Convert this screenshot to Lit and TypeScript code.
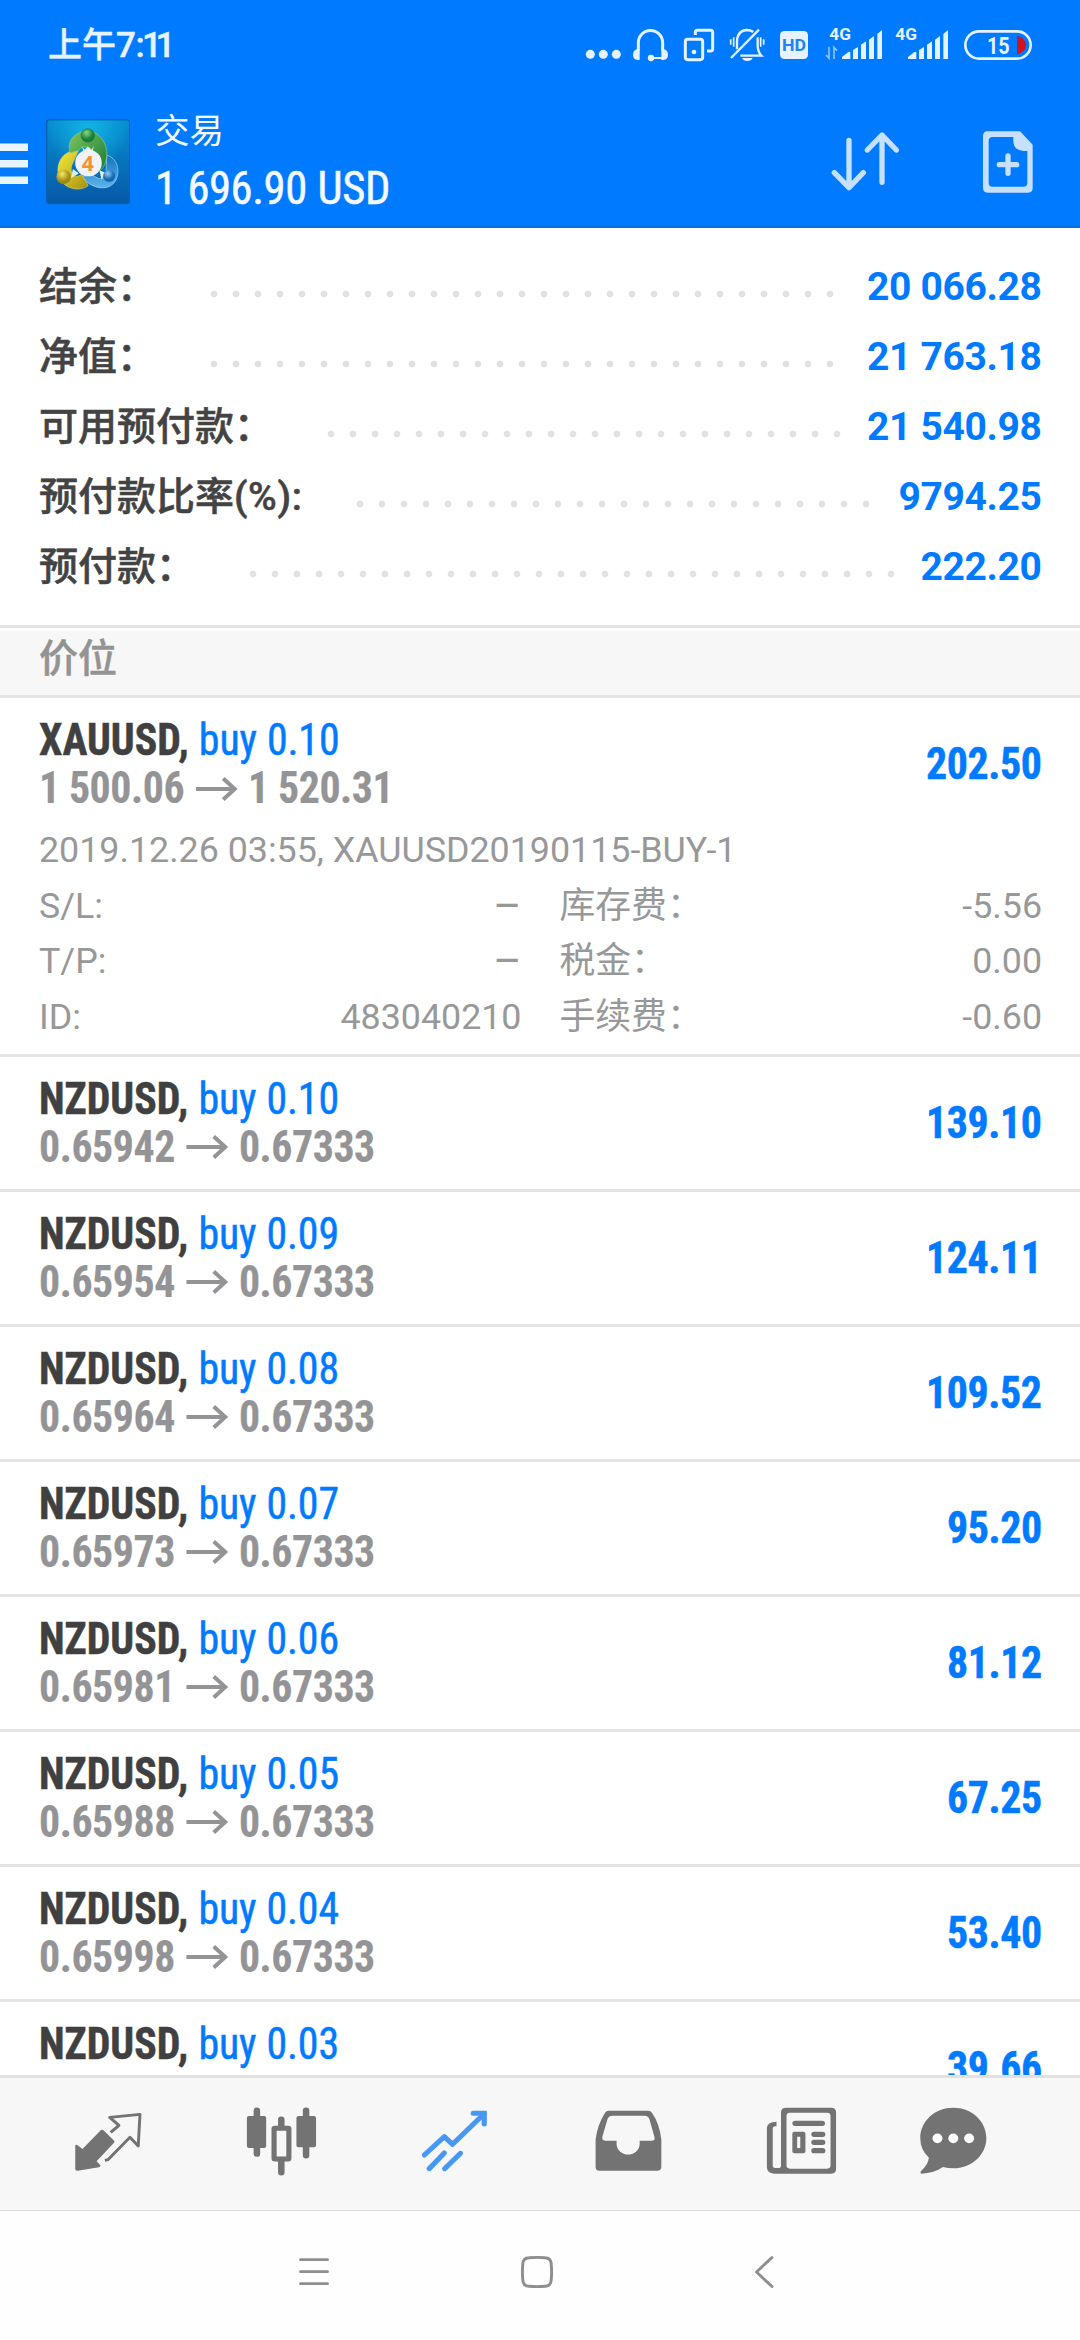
import { LitElement, html, css, svg, nothing } from "lit";
import { customElement, property } from "lit/decorators.js";

interface SummaryRow { label: string; suffix?: string; value: string; dots: number; }
interface Trade {
  symbol: string; side: string; open: string; now: string; profit: string;
  details?: { comment: string; rows: [string, string, string, string][] };
}

const SUMMARY: SummaryRow[] = [
  { label: "结余：", value: "20 066.28", dots: 29 },
  { label: "净值：", value: "21 763.18", dots: 29 },
  { label: "可用预付款：", value: "21 540.98", dots: 24 },
  { label: "预付款比率", suffix: "(%):", value: "9794.25", dots: 24 },
  { label: "预付款：", value: "222.20", dots: 30 },
];

const nzd = (side: string, open: string, profit: string): Trade =>
  ({ symbol: "NZDUSD", side, open, now: "0.67333", profit });

const TRADES: Trade[] = [
  {
    symbol: "XAUUSD", side: "buy 0.10", open: "1 500.06", now: "1 520.31", profit: "202.50",
    details: {
      comment: "2019.12.26 03:55, XAUUSD20190115-BUY-1",
      rows: [
        ["S/L:", "–", "库存费：", "-5.56"],
        ["T/P:", "–", "税金：", "0.00"],
        ["ID:", "483040210", "手续费：", "-0.60"],
      ],
    },
  },
  nzd("buy 0.10", "0.65942", "139.10"),
  nzd("buy 0.09", "0.65954", "124.11"),
  nzd("buy 0.08", "0.65964", "109.52"),
  nzd("buy 0.07", "0.65973", "95.20"),
  nzd("buy 0.06", "0.65981", "81.12"),
  nzd("buy 0.05", "0.65988", "67.25"),
  nzd("buy 0.04", "0.65998", "53.40"),
  nzd("buy 0.03", "0.66010", "39.66"),
];

const base = css`
  * { box-sizing: border-box; }
  svg { display: block; flex: none; }
`;

@customElement("status-bar")
class StatusBar extends LitElement {
  static styles = [base, css`
    :host { display: flex; height: 90px; align-items: center; justify-content: space-between; padding: 0 44px 0 48px; color: #e6f3ff; }
    .time { font: 500 34px/91px Roboto, "Noto Sans CJK SC", sans-serif; white-space: nowrap; -webkit-text-stroke: 0.4px #e6f3ff; }
    .digits { font-size: 35px; letter-spacing: -0.3px; }
    .colon { letter-spacing: -2.8px; }
    .ones { letter-spacing: -6.3px; }
    .t { font-family: Roboto, sans-serif; font-weight: 700; }
  `];
  render() {
    const bars = (x: number) => svg`
      <path d="M${x} 177V171L${x + 18} 157Q${x + 25} 153 ${x + 25} 159V177Z"/>
      <path d="M${x + 33} 177V150L${x + 48} 141V177ZM${x + 57} 177V134L${x + 72} 124V177ZM${x + 81} 177V119L${x + 96} 108V177ZM${x + 106} 177V102L${x + 120} 90V177Z"/>`;
    return html`
      <div class="time">上午<span class="digits">7<span class="colon">:</span><span class="ones">11</span></span></div>
      <svg width="452" height="90" viewBox="72 0 1356 270" fill="#e6f3ff">
        <circle cx="91" cy="163" r="13.5"/><circle cx="130" cy="163" r="13.5"/><circle cx="169" cy="163" r="13.5"/>
        <g fill="none" stroke="#e6f3ff" stroke-width="9">
          <path d="M235 152V128a36.500 36.500 0 0 1 73 0V152"/>
          <path d="M273 174H308" stroke-width="6"/>
          <rect x="376" y="118" width="52" height="61" rx="7"/>
          <path d="M406 105V97Q406 91 412 91H452Q458 91 458 97V147Q458 153 452 153H441"/>
          <path d="M513 174L597 89" stroke-width="7"/>
          <path d="M531 148V126Q531 92 560 90Q572 90 580 96M593 112V140Q595 158 604 167H541" stroke-width="7"/>
          <path d="M521 112V140M512 118V134M602 112V140M611 118V134" stroke-width="5"/>
        </g>
        <path d="M239 148V180H233Q219 178 219 165Q219 150 232 148ZM304 148V180H310Q324 178 324 165Q324 150 311 148Z"/>
        <circle cx="273" cy="174" r="9.500"/><circle cx="402" cy="156" r="7"/>
        <path d="M546 174H578Q574 183 562 183T546 174Z"/>
        <rect x="660" y="93" width="84" height="84" rx="13"/>
        <text class="t" x="702" y="154" font-size="52" text-anchor="middle" textLength="72" lengthAdjust="spacingAndGlyphs" fill="#1f83f5">HD</text>
        <text class="t" x="808" y="120" font-size="47" textLength="65" lengthAdjust="spacingAndGlyphs">4G</text>
        <text class="t" x="1006" y="120" font-size="47" textLength="65" lengthAdjust="spacingAndGlyphs">4G</text>
        ${bars(846)} ${bars(1044)}
        <path d="M807 140V175L798 165M822 177V142L831 152" fill="none" stroke="#8cc2ff" stroke-width="5"/>
        <rect x="1216" y="94" width="196" height="82" rx="41" fill="none" stroke="#e6f3ff" stroke-width="8"/>
        <text class="t" x="1281" y="161" font-size="72" textLength="68" lengthAdjust="spacingAndGlyphs">15</text>
        <path d="M1371 107Q1398 114 1398 135T1371 163Z" fill="#d0131f"/>
      </svg>`;
  }
}

@customElement("app-header")
class AppHeader extends LitElement {
  static styles = [base, css`
    :host { display: flex; height: 138px; padding: 15px 46px 0 0; border-bottom: 2px solid #0b6cdb; color: #f4faff; font-family: Roboto, "Noto Sans CJK SC", sans-serif; }
    .menu { margin: 38px 18px 0 0; }
    .logo { margin-top: 14px; }
    .titles { margin-left: 25px; flex: 1; }
    .title { font-size: 34.5px; line-height: 46px; margin-top: 3px; }
    .sum { font-size: 47px; line-height: 56px; margin-top: 6px; font-stretch: 75%; letter-spacing: -0.45px; word-spacing: 1px; -webkit-text-stroke: 0.5px #f4faff; transform: scaleX(0.95); transform-origin: left; white-space: nowrap; }
    .four { font: 700 64px "Open Sans", sans-serif; }
    .swap { margin: 25px 79px 0 0; }
    .add { margin-top: 25px; }
  `];
  render() {
    return html`
      <svg class="menu" width="28" height="42" viewBox="0 0 28 42" fill="#e8f5ff">
        <path d="M0 .5H28V8H0ZM0 17H28V24.500H0ZM0 33.500H28V41H0Z"/>
      </svg>
      <svg class="logo" width="84" height="86" viewBox="137 58 253 258">
        <defs>
          <linearGradient id="bg" x2="0" y2="1"><stop offset="0" stop-color="#078fd2"/><stop offset="1" stop-color="#0758a8"/></linearGradient>
          <radialGradient id="gl" cy=".1"><stop offset="0" stop-color="#12b4e4"/><stop offset="1" stop-color="#12b4e4" stop-opacity="0"/></radialGradient>
          <linearGradient id="gr" x2="1" y2="1"><stop offset="0" stop-color="#7fc45e"/><stop offset="1" stop-color="#157a36"/></linearGradient>
          <linearGradient id="ye" x2="1" y2="1"><stop offset="0" stop-color="#f6ec3a"/><stop offset="1" stop-color="#a58f10"/></linearGradient>
          <linearGradient id="bl" x2="0" y2="1"><stop offset="0" stop-color="#1273bd"/><stop offset="1" stop-color="#5db4ea"/></linearGradient>
          <radialGradient id="hg" cx=".4" cy=".3"><stop offset="0" stop-color="#8fd67e"/><stop offset="1" stop-color="#16803c"/></radialGradient>
          <radialGradient id="hy" cx=".4" cy=".3"><stop offset="0" stop-color="#f4ea62"/><stop offset="1" stop-color="#a08a14"/></radialGradient>
          <radialGradient id="hb" cx=".4" cy=".3"><stop offset="0" stop-color="#8fcdf2"/><stop offset="1" stop-color="#1268b0"/></radialGradient>
        </defs>
        <rect x="139" y="60" width="250" height="252" rx="8" fill="url(#bg)" stroke="#0560b4" stroke-width="4"/>
        <rect x="141" y="62" width="246" height="248" rx="7" fill="url(#gl)"/>
        <path d="M320 166C350 176 360 206 350 236C336 274 282 276 244 232L272 222C300 246 318 240 318 214Z" fill="url(#bl)" stroke="#a8dcf6" stroke-width="2"/>
        <path d="M234 153C192 150 168 184 174 224C186 270 238 278 264 258L244 224C224 240 208 222 214 198Z" fill="url(#ye)" stroke="#e0d45c" stroke-width="2"/>
        <path d="M210 160C196 118 232 94 263 94C306 96 330 146 316 188C310 206 300 214 290 218L282 170C276 136 248 134 234 152Z" fill="url(#gr)" stroke="#8fd07a" stroke-width="2"/>
        <path d="M246 140L253 150L263 140L274 150L282 138L276 158H250ZM212 236L218 208L236 222ZM304 240L298 212L318 220Z" fill="#dfeede"/>
        <circle cx="263" cy="107" r="20" fill="url(#hg)" stroke="#14703a" stroke-width="2"/>
        <circle cx="190" cy="232" r="22" fill="url(#hy)"/>
        <circle cx="327" cy="229" r="18" fill="url(#hb)"/>
        <circle cx="265" cy="190" r="40" fill="#f1f1f8"/>
        <text class="four" x="263" y="213" text-anchor="middle" fill="#f3922f">4</text>
      </svg>
      <div class="titles">
        <div class="title">交易</div>
        <div class="sum">1 696.90 USD</div>
      </div>
      <svg class="swap" width="72" height="64" viewBox="812 390 216 192" fill="none" stroke="#c6e0ff" stroke-width="16" stroke-linecap="round" stroke-linejoin="round">
        <path d="M866 421V562M822 518L866 563L909 518M965 547V406M921 450L965 405L1008 450"/>
      </svg>
      <svg class="add" width="52" height="64" viewBox="1266 390 156 192" fill="#c6e0ff">
        <path fill-rule="evenodd" d="M1283 394H1380L1418 434V564Q1418 578 1404 578H1283Q1269 578 1269 564V408Q1269 394 1283 394ZM1298 411Q1286 411 1286 423V548Q1286 560 1298 560H1390Q1402 560 1402 548V453H1390Q1360 450 1360 422V411Z"/>
        <path d="M1344 468V520M1318 494H1370" stroke="#c6e0ff" stroke-width="16" stroke-linecap="round"/>
      </svg>`;
  }
}

@customElement("account-summary")
class AccountSummary extends LitElement {
  static styles = [base, css`
    :host { display: block; padding: 24px 38.5px 23px 39px; font: 500 39px/70px Roboto, "Noto Sans CJK SC", sans-serif; }
    .row { display: flex; height: 70px; white-space: nowrap; }
    .label { color: #434343; -webkit-text-stroke: 0.5px #434343; }
    .suffix { letter-spacing: 0.6px; }
    .dots { margin: 38.3px 0 0 46.5px; height: 8px; background: radial-gradient(circle at 11px 4px, #e1e1e1 2.900px, transparent 3.800px) 0 0 / 22px 8px repeat-x; }
    .value { margin-left: auto; color: #007aff; font-weight: 700; letter-spacing: -0.35px; }
  `];
  render() {
    return SUMMARY.map((r) => html`
      <div class="row">
        <span class="label">${r.label}${r.suffix ? html`<span class="suffix">${r.suffix}</span>` : nothing}</span>
        <span class="dots" style="width:${r.dots * 22}px"></span>
        <span class="value">${r.value}</span>
      </div>`);
  }
}

@customElement("trade-item")
class TradeItem extends LitElement {
  @property({ attribute: false }) trade!: Trade;
  static styles = [base, css`
    :host { display: block; border-bottom: 3px solid #e4e4e4; font-family: Roboto, "Noto Sans CJK SC", sans-serif; color: #949496; }
    .head { display: flex; justify-content: space-between; align-items: center; height: 132px; padding: 0 38.5px 0 39px; font-size: 44px; line-height: 48px; font-weight: 700; white-space: nowrap; font-stretch: 75%; -webkit-text-stroke: 0.5px currentColor; }
    .deal { transform: scaleX(0.95); transform-origin: left; }
    .name { color: #404040; word-spacing: 0.6px; }
    .side { color: #007aff; font-weight: 400; letter-spacing: -0.1px; }
    .rates { display: flex; align-items: center; height: 48px; padding-top: 1px; line-height: 47px; letter-spacing: -0.45px; -webkit-text-stroke: 0.2px currentColor; }
    .arrow { margin: 0 11px 0 12.200px; }
    .profit { color: #007aff; letter-spacing: -0.4px; transform: scaleX(0.95); transform-origin: right; }
    .details { margin-top: -7px; padding: 0 38px 8.600px 39px; font-size: 35.800px; line-height: 55.600px; color: #989898; }
    .line { display: grid; grid-template-columns: 1fr 1fr; column-gap: 38px; height: 55.600px; }
    .pair { display: flex; justify-content: space-between; }
    .dash { font-size: 43px; }
  `];
  render() {
    const t = this.trade;
    return html`
      <div class="head">
        <div class="deal">
          <div class="name">${t.symbol}, <span class="side">${t.side}</span></div>
          <div class="rates">
            <span>${t.open}</span>
            <svg class="arrow" width="44.200" height="24" viewBox="0 0 42 24" preserveAspectRatio="none" fill="none" stroke="#949496" stroke-width="4"><path d="M0 12H38M27.500 1.500L39 12L27.500 22.500"/></svg>
            <span>${t.now}</span>
          </div>
        </div>
        <div class="profit">${t.profit}</div>
      </div>
      ${t.details ? html`
        <div class="details">
          <div>${t.details.comment}</div>
          ${t.details.rows.map(([a, b, c, d]) => html`
            <div class="line">
              <div class="pair"><span>${a}</span><span class=${b === "–" ? "dash" : ""}>${b}</span></div>
              <div class="pair"><span>${c}</span><span>${d}</span></div>
            </div>`)}
        </div>` : nothing}`;
  }
}

@customElement("tab-bar")
class TabBar extends LitElement {
  static styles = [base, css`
    :host { display: grid; grid-template-columns: repeat(5, 173.300px) 131px; justify-items: center; align-items: start; height: 136px; padding: 25.300px 0 0 21.500px; background: #f7f7f7; border-top: 3px solid #e1e1e1; border-bottom: 1px solid #dcdcdc; }
  `];
  render() {
    return html`
      <svg width="82.600" height="80" viewBox="195 130 240 240" preserveAspectRatio="none" fill="#737373">
        <path d="M293 212Q297 208 301 212L332 243Q335 247 331 250L281 305L292 317Q293 322 288 323L226 333Q219 334 219 327V258Q220 253 225 256L240 268Z"/>
        <path d="M322 218L346 197L319 173L407 164L402 259L378 233L314 300L305 302" fill="none" stroke="#737373" stroke-width="8.500" stroke-linejoin="round"/>
      </svg>
      <svg width="82.600" height="80" viewBox="696 130 240 240" preserveAspectRatio="none" fill="#737373">
        <g stroke="#737373" stroke-width="19" stroke-linecap="round"><path d="M745 153V282M888 153V287M816 180V200M816 305V338"/></g>
        <rect x="716" y="169" width="56" height="96" rx="6"/><rect x="860" y="169" width="57" height="94" rx="6"/>
        <rect x="795" y="206" width="43" height="92" rx="2" fill="#f7f7f7" stroke="#737373" stroke-width="15"/>
      </svg>
      <svg width="82.600" height="80" viewBox="1198 130 240 240" preserveAspectRatio="none" fill="none" stroke="#4798f5" stroke-width="15" stroke-linecap="round" stroke-linejoin="round">
        <path d="M1231 286L1289 231L1313 254L1404 163M1245 327L1289 280M1290 327L1336 281"/>
        <path d="M1373 161H1405V193M1392 161H1405V174" stroke-linejoin="miter"/>
      </svg>
      <svg width="82.600" height="80" viewBox="134 370 240 240" preserveAspectRatio="none" fill="#737373">
        <path fill-rule="evenodd" d="M196 393H312Q319 393 323 400Q345 432 350 480V561Q350 573 338 573H170Q159 573 159 561V480Q164 436 186 400Q190 393 196 393ZM208 408Q198 408 194 417L179 470Q176 483 187 483H220V493A33 31 0 0 0 287 493V483H322Q333 483 330 472L315 417Q311 408 301 408Z"/>
      </svg>
      <svg width="82.600" height="80" viewBox="637 370 240 240" preserveAspectRatio="none" fill="#737373">
        <path fill-rule="evenodd" d="M713 384H844Q858 384 858 398V568Q858 582 844 582H678Q657 580 657 562V445Q657 427 685 426V440H680Q674 441 674 447V558Q674 565 681 565H690Q698 565 698 558V398Q698 384 713 384ZM724 399Q714 399 714 409V557Q714 567 724 567H832Q842 567 842 557V409Q842 399 832 399Z"/>
        <path d="M739 431H818M794 464H819M794 488H819M794 513H819" stroke="#737373" stroke-width="16" stroke-linecap="round"/>
        <path fill-rule="evenodd" d="M737 456H763Q769 456 769 462V515Q769 521 763 521H737Q731 521 731 515V462Q731 456 737 456ZM745 471V505H754V471Z"/>
      </svg>
      <svg width="82.600" height="80" viewBox="1079 370 240 240" preserveAspectRatio="none" fill="#737373">
        <path d="M1199 384C1252 384 1295 424 1295 475S1252 566 1199 566Q1183 566 1169 562Q1142 581 1106 582Q1100 578 1109 570Q1126 553 1128 534Q1103 510 1103 475C1103 424 1146 384 1199 384Z"/>
        <g fill="#fff"><circle cx="1153" cy="476" r="14.500"/><circle cx="1199" cy="476" r="14.500"/><circle cx="1245" cy="476" r="14.500"/></g>
      </svg>`;
  }
}

@customElement("nav-bar")
class NavBar extends LitElement {
  static styles = [base, css`
    :host { display: flex; height: 129px; padding: 41px 0 0 297px; background: #fefefe; }
    .home { margin-left: 187px; }
    .back { margin-left: 195px; }
  `];
  render() {
    return html`
      <svg width="34" height="40" viewBox="0 0 34 40" stroke="#8e8e8e" stroke-width="2.800" stroke-linecap="round"><path d="M3.500 7.700H30.500M3.500 19.700H30.500M3.500 31.700H30.500"/></svg>
      <svg class="home" width="40" height="40" viewBox="0 0 40 40" fill="none" stroke="#8e8e8e" stroke-width="2.900"><path d="M4.800 12Q5 6 11 5.700Q19 5 27 5.700Q33 6 33.200 12Q34 20 33.200 28Q33 34 27 34.300Q19 35 11 34.300Q5 34 4.800 28Q4 20 4.800 12Z"/></svg>
      <svg class="back" width="24" height="40" viewBox="0 0 24 40" fill="none" stroke="#8e8e8e" stroke-width="2.900" stroke-linecap="round" stroke-linejoin="round"><path d="M19 5.500L3.500 20L19 34.500"/></svg>`;
  }
}

@customElement("app-root")
class AppRoot extends LitElement {
  static styles = [base, css`
    :host { display: flex; flex-direction: column; width: 1080px; height: 2340px; overflow: hidden; background: #fff; }
    .top { background: #007aff; flex: none; }
    .section { flex: none; height: 73px; padding: 0 39px; border-top: 3px solid #e4e4e4; border-bottom: 3px solid #e4e4e4; box-shadow: inset 0 3px #fff; background: #f7f7f7; color: #939393; font: 500 39px/63px Roboto, "Noto Sans CJK SC", sans-serif; -webkit-text-stroke: 0.5px #939393; }
    .list { flex: 1; min-height: 0; overflow: hidden; }
    account-summary, tab-bar, nav-bar { flex: none; }
  `];
  render() {
    return html`
      <div class="top"><status-bar></status-bar><app-header></app-header></div>
      <account-summary></account-summary>
      <div class="section">价位</div>
      <div class="list">${TRADES.map((t) => html`<trade-item .trade=${t}></trade-item>`)}</div>
      <tab-bar></tab-bar>
      <nav-bar></nav-bar>`;
  }
}
